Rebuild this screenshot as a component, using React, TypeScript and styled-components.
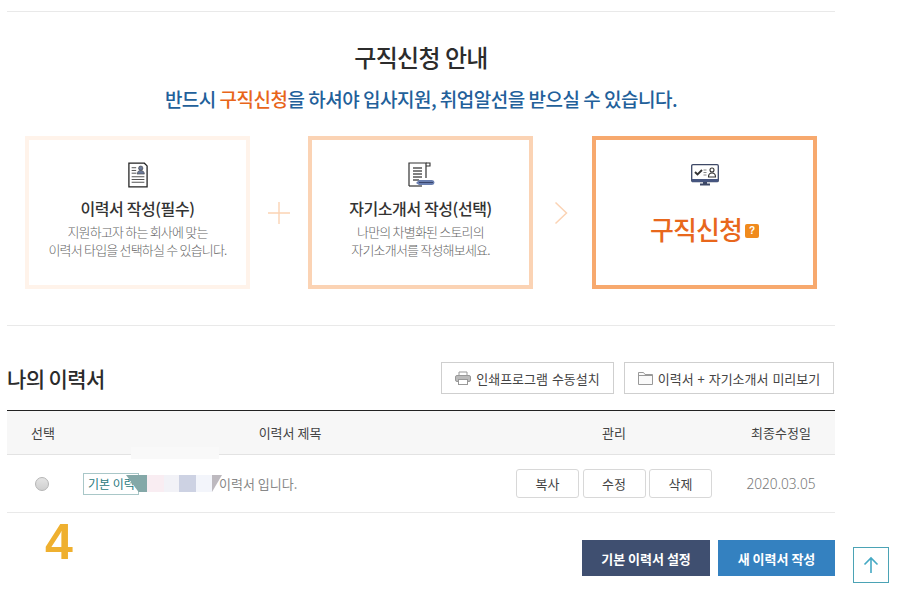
import React from "react";
import styled, { createGlobalStyle } from "styled-components";

const Global = createGlobalStyle`
  html, body { margin: 0; padding: 0; background: #fff; }
  body { font-family: "Noto Sans CJK KR", "Noto Sans", sans-serif; color: #333; }
  * { box-sizing: border-box; }
`;

const Page = styled.div`
  position: relative;
  width: 898px;
  height: 606px;
  overflow: hidden;
  padding: 11px 63px 0 7px;
`;

const Guide = styled.section`
  border-top: 1px solid #e9e9e9;
  border-bottom: 1px solid #e9e9e9;
  height: 315px;
  padding-top: 28px;
  text-align: center;
`;

const Heading = styled.h2`
  margin: 0;
  font-size: 24px;
  line-height: 34px;
  font-weight: 500;
  letter-spacing: -0.6px;
  color: #2c2c2c;
`;

const Lead = styled.p`
  margin: 11px 0 0;
  font-size: 19px;
  line-height: 28px;
  font-weight: 500;
  letter-spacing: -0.5px;
  color: #22609a;
`;

const Accent = styled.span`
  color: #e8651a;
`;

const Steps = styled.div`
  display: flex;
  align-items: stretch;
  margin: 23px 0 0 18px;
`;

const StepCard = styled.div<{ $border: string }>`
  flex: none;
  width: 225px;
  height: 153px;
  border: 4px solid ${(p) => p.$border};
  padding-top: 21px;
  display: flex;
  flex-direction: column;
  align-items: center;
`;

const IconSlot = styled.div`
  height: 28px;
  display: flex;
  align-items: center;
  justify-content: center;
`;

const StepTitle = styled.h3`
  margin: 7px 0 0;
  font-size: 16px;
  line-height: 24px;
  font-weight: 500;
  letter-spacing: -0.4px;
  color: #333;
`;

const StepText = styled.p`
  margin: 3px 0 0;
  font-size: 13px;
  line-height: 18px;
  font-weight: 300;
  letter-spacing: -0.8px;
  color: #666;
`;

const Connector = styled.div<{ $width: number }>`
  flex: none;
  width: ${(p) => p.$width}px;
  display: flex;
  align-items: center;
  justify-content: center;
`;

const ApplyTitle = styled.div`
  margin-top: 21px;
  display: flex;
  align-items: center;
  gap: 3px;
  font-size: 26px;
  line-height: 38px;
  font-weight: 500;
  letter-spacing: -0.9px;
  color: #e8671c;
`;

const Help = styled.span`
  width: 14px;
  height: 14px;
  margin-top: 3px;
  border-radius: 2px;
  background: #f08a1d;
  color: #fff;
  font: 700 10px/14px "Liberation Sans", sans-serif;
  letter-spacing: 0;
  text-align: center;
`;

const ResumeBar = styled.div`
  display: flex;
  align-items: center;
  justify-content: space-between;
  padding: 20px 1px 0 0;
  height: 84px;
`;

const ResumeTitle = styled.h2`
  margin: 0;
  font-size: 21px;
  line-height: 32px;
  font-weight: 500;
  letter-spacing: -0.6px;
  color: #2b2b2b;
`;

const BarActions = styled.div`
  display: flex;
  gap: 10px;
`;

const OutlineButton = styled.button<{ $width: number }>`
  width: ${(p) => p.$width}px;
  height: 32px;
  padding: 0;
  display: flex;
  align-items: center;
  justify-content: center;
  gap: 5px;
  border: 1px solid #cfcfcf;
  background: #fff;
  font-family: inherit;
  font-size: 13px;
  letter-spacing: 0;
  word-spacing: 1px;
  color: #444;
`;

const Table = styled.div`
  border-top: 1px solid #222;
`;

const gridColumns = "72px 422px 226px 108px";

const HeadRow = styled.div`
  display: grid;
  grid-template-columns: ${gridColumns};
  align-items: center;
  height: 44px;
  background: #f7f7f7;
  border-bottom: 1px solid #e3e3e3;
  font-size: 13px;
  letter-spacing: 0;
  color: #444;
  text-align: center;
`;

const BodyRow = styled.div`
  position: relative;
  display: grid;
  grid-template-columns: ${gridColumns};
  align-items: center;
  height: 58px;
  border-bottom: 1px solid #e9e9e9;
`;

const RadioCell = styled.div`
  display: flex;
  padding-left: 28px;
`;

const Radio = styled.span`
  width: 14px;
  height: 14px;
  border-radius: 50%;
  border: 1px solid #b5b5b5;
  background: linear-gradient(#e4e4e4, #cfcfcf);
`;

const TitleCell = styled.div`
  display: flex;
  align-items: center;
  font-size: 13px;
  letter-spacing: 0;
  color: #888;
  padding-left: 4px;
`;

const Badge = styled.span`
  flex: none;
  width: 56px;
  height: 22px;
  padding-left: 4px;
  border: 1px solid #a9c7c8;
  font-size: 12px;
  line-height: 19px;
  color: #2a7a80;
  white-space: nowrap;
`;

const RowTitle = styled.span`
  margin-left: 80px;
`;

const Manage = styled.div`
  display: flex;
  gap: 3.5px;
  padding-left: 15px;
`;

const SmallButton = styled.button`
  width: 63px;
  height: 29px;
  padding: 0;
  border: 1px solid #d8d8d8;
  border-radius: 3px;
  background: #fff;
  font-family: inherit;
  font-size: 13px;
  color: #444;
`;

const DateCell = styled.div`
  font-family: "Noto Sans", sans-serif;
  font-size: 13.7px;
  font-weight: 300;
  color: #777;
  text-align: center;
`;

const Mosaic = styled.div`
  position: absolute;
  left: 119px;
  top: -8px;
  width: 100px;
  height: 46px;
  filter: blur(0.4px);
`;

const Patch = styled.span<{ $x: number; $y: number; $w: number; $h: number; $c: string; $clip?: string }>`
  position: absolute;
  left: ${(p) => p.$x}px;
  top: ${(p) => p.$y}px;
  width: ${(p) => p.$w}px;
  height: ${(p) => p.$h}px;
  background: ${(p) => p.$c};
  clip-path: ${(p) => p.$clip ?? "none"};
`;

const RowFooter = styled.div`
  display: flex;
  justify-content: flex-end;
  gap: 8px;
  padding-top: 27px;
`;

const SolidButton = styled.button<{ $bg: string; $width: number }>`
  width: ${(p) => p.$width}px;
  height: 36px;
  padding: 0;
  border: 0;
  background: ${(p) => p.$bg};
  font-family: inherit;
  font-size: 13px;
  font-weight: 700;
  letter-spacing: 0;
  color: #fff;
`;

const StepNumber = styled.div`
  position: absolute;
  left: 45px;
  top: 512px;
  font: 700 50px/60px "Liberation Sans", sans-serif;
  color: #efb02f;
`;

const TopButton = styled.button`
  position: absolute;
  left: 853px;
  top: 547px;
  width: 36px;
  height: 36px;
  padding: 0;
  border: 1px solid #4ba3b5;
  background: #fff;
  display: flex;
  align-items: center;
  justify-content: center;
`;

const ResumeIcon = () => (
  <svg width="20" height="26" viewBox="0 0 22 28" fill="none">
    <path d="M1 1h17l3 3v23H1z" fill="#fff" stroke="#222" strokeWidth="1.4" />
    <path d="M4 6h5M4 9h5M4 12h5" stroke="#555" strokeWidth="1.1" />
    <circle cx="14" cy="6.5" r="2.4" fill="#6c7a99" stroke="#333" strokeWidth=".6" />
    <path d="M10 13c0-3 2-4 4-4s4 1 4 4z" fill="#6c7a99" stroke="#333" strokeWidth=".6" />
    <path d="M4 16h14M4 19h14M4 22h14" stroke="#555" strokeWidth="1.2" />
  </svg>
);

const LetterIcon = () => (
  <svg width="28" height="26" viewBox="0 0 28 26" fill="none">
    <path d="M2 24V1h17v15" fill="#fff" stroke="#333" strokeWidth="1.2" />
    <path d="M2 24h13" stroke="#333" strokeWidth="1.2" />
    <path d="M19 1h4v3h-4" stroke="#333" strokeWidth="1.1" />
    <path d="M6 6h9M6 9h9M6 12h9M6 15h9M6 18h6" stroke="#555" strokeWidth="1.3" />
    <path d="M9 21l3-3h13a2 2 0 0 1 0 5H12z" fill="#6a7fb0" />
    <path d="M12 20.5h14" stroke="#39456b" strokeWidth="1" />
  </svg>
);

const MonitorIcon = () => (
  <svg width="28" height="22" viewBox="0 0 28 22" fill="none">
    <rect x=".7" y=".7" width="26.6" height="17" rx="1.2" fill="#fff" stroke="#3d4866" strokeWidth="1.3" />
    <rect x="1" y="15" width="26" height="3" fill="#46557f" />
    <path d="M4 8l2.5 2.5L11 6" stroke="#333" strokeWidth="1.9" />
    <path d="M12.5 6h3M12.5 8.5h3M12.5 11h3" stroke="#888" strokeWidth="1" />
    <circle cx="21" cy="6" r="2" stroke="#333" strokeWidth="1.1" />
    <path d="M17.5 13c0-3 1.5-4 3.5-4s3.5 1 3.5 4z" stroke="#333" strokeWidth="1.1" />
    <path d="M9 20.5h10" stroke="#3d4866" strokeWidth="2" />
    <path d="M12 18h4v2h-4z" fill="#3d4866" />
  </svg>
);

const PlusIcon = () => (
  <svg width="24" height="24" viewBox="0 0 24 24" fill="none">
    <path d="M12 1v22M1 12h22" stroke="#fbd3b4" strokeWidth="1.4" />
  </svg>
);

const ChevronIcon = () => (
  <svg width="18" height="24" viewBox="0 0 18 24" fill="none">
    <path d="M1.5 1.5L12.5 12 1.5 22.5" stroke="#fbd3b4" strokeWidth="1.5" />
  </svg>
);

const PrintIcon = () => (
  <svg width="16" height="14" viewBox="0 0 16 14" fill="none">
    <path d="M4 4V1h8v3" stroke="#999" />
    <rect x=".5" y="4.5" width="15" height="6" rx="1.5" fill="#bbb" stroke="#999" />
    <rect x="3.5" y="8.5" width="9" height="5" fill="#fff" stroke="#999" />
  </svg>
);

const FolderIcon = () => (
  <svg width="15" height="13" viewBox="0 0 15 13" fill="none">
    <path d="M.5 12.5V.5h5l1.5 2h7.5v10z" fill="#fafafa" stroke="#999" />
    <path d="M.5 3.5h14" stroke="#999" />
  </svg>
);

const ArrowIcon = () => (
  <svg width="16" height="18" viewBox="0 0 16 18" fill="none">
    <path d="M8 17V2M1.5 8.5L8 2l6.5 6.5" stroke="#45a9c4" strokeWidth="1.6" />
  </svg>
);

export default function App() {
  return (
    <Page>
      <Global />
      <Guide>
        <Heading>구직신청 안내</Heading>
        <Lead>
          반드시 <Accent>구직신청</Accent>을 하셔야 입사지원, 취업알선을 받으실 수 있습니다.
        </Lead>
        <Steps>
          <StepCard $border="#fff3ea">
            <IconSlot>
              <ResumeIcon />
            </IconSlot>
            <StepTitle>이력서 작성(필수)</StepTitle>
            <StepText>
              지원하고자 하는 회사에 맞는
              <br />
              이력서 타입을 선택하실 수 있습니다.
            </StepText>
          </StepCard>
          <Connector $width={58}>
            <PlusIcon />
          </Connector>
          <StepCard $border="#fbd3b4">
            <IconSlot>
              <LetterIcon />
            </IconSlot>
            <StepTitle>자기소개서 작성(선택)</StepTitle>
            <StepText>
              나만의 차별화된 스토리의
              <br />
              자기소개서를 작성해보세요.
            </StepText>
          </StepCard>
          <Connector $width={59}>
            <ChevronIcon />
          </Connector>
          <StepCard $border="#f7a96e">
            <IconSlot>
              <MonitorIcon />
            </IconSlot>
            <ApplyTitle>
              구직신청<Help>?</Help>
            </ApplyTitle>
          </StepCard>
        </Steps>
      </Guide>

      <ResumeBar>
        <ResumeTitle>나의 이력서</ResumeTitle>
        <BarActions>
          <OutlineButton $width={173}>
            <PrintIcon />
            인쇄프로그램 수동설치
          </OutlineButton>
          <OutlineButton $width={210}>
            <FolderIcon />
            이력서 + 자기소개서 미리보기
          </OutlineButton>
        </BarActions>
      </ResumeBar>

      <Table>
        <HeadRow>
          <div>선택</div>
          <div>이력서 제목</div>
          <div>관리</div>
          <div>최종수정일</div>
        </HeadRow>
        <BodyRow>
          <RadioCell>
            <Radio />
          </RadioCell>
          <TitleCell>
            <Badge>기본 이력서</Badge>
            <RowTitle>이력서 입니다.</RowTitle>
          </TitleCell>
          <Manage>
            <SmallButton>복사</SmallButton>
            <SmallButton>수정</SmallButton>
            <SmallButton>삭제</SmallButton>
          </Manage>
          <DateCell>2020.03.05</DateCell>
          <Mosaic>
            <Patch $x={5} $y={0} $w={88} $h={12} $c="#f9f9f9" />
            <Patch $x={0} $y={28} $w={21} $h={17} $c="#84a8a8" $clip="polygon(0 0, 100% 0, 100% 100%, 60% 100%)" />
            <Patch $x={21} $y={28} $w={17} $h={17} $c="#f9edf2" />
            <Patch $x={38} $y={28} $w={15} $h={17} $c="#f2f2f7" />
            <Patch $x={53} $y={28} $w={17} $h={17} $c="#cdd2e3" />
            <Patch $x={70} $y={28} $w={16} $h={17} $c="#f3f5fb" />
            <Patch $x={86} $y={28} $w={10} $h={17} $c="#bdb9bf" $clip="polygon(0 0, 100% 0, 0 100%)" />
          </Mosaic>
        </BodyRow>
      </Table>

      <RowFooter>
        <SolidButton $bg="#3f4f70" $width={128}>기본 이력서 설정</SolidButton>
        <SolidButton $bg="#3481c0" $width={117}>새 이력서 작성</SolidButton>
      </RowFooter>

      <StepNumber>4</StepNumber>
      <TopButton aria-label="맨 위로">
        <ArrowIcon />
      </TopButton>
    </Page>
  );
}
